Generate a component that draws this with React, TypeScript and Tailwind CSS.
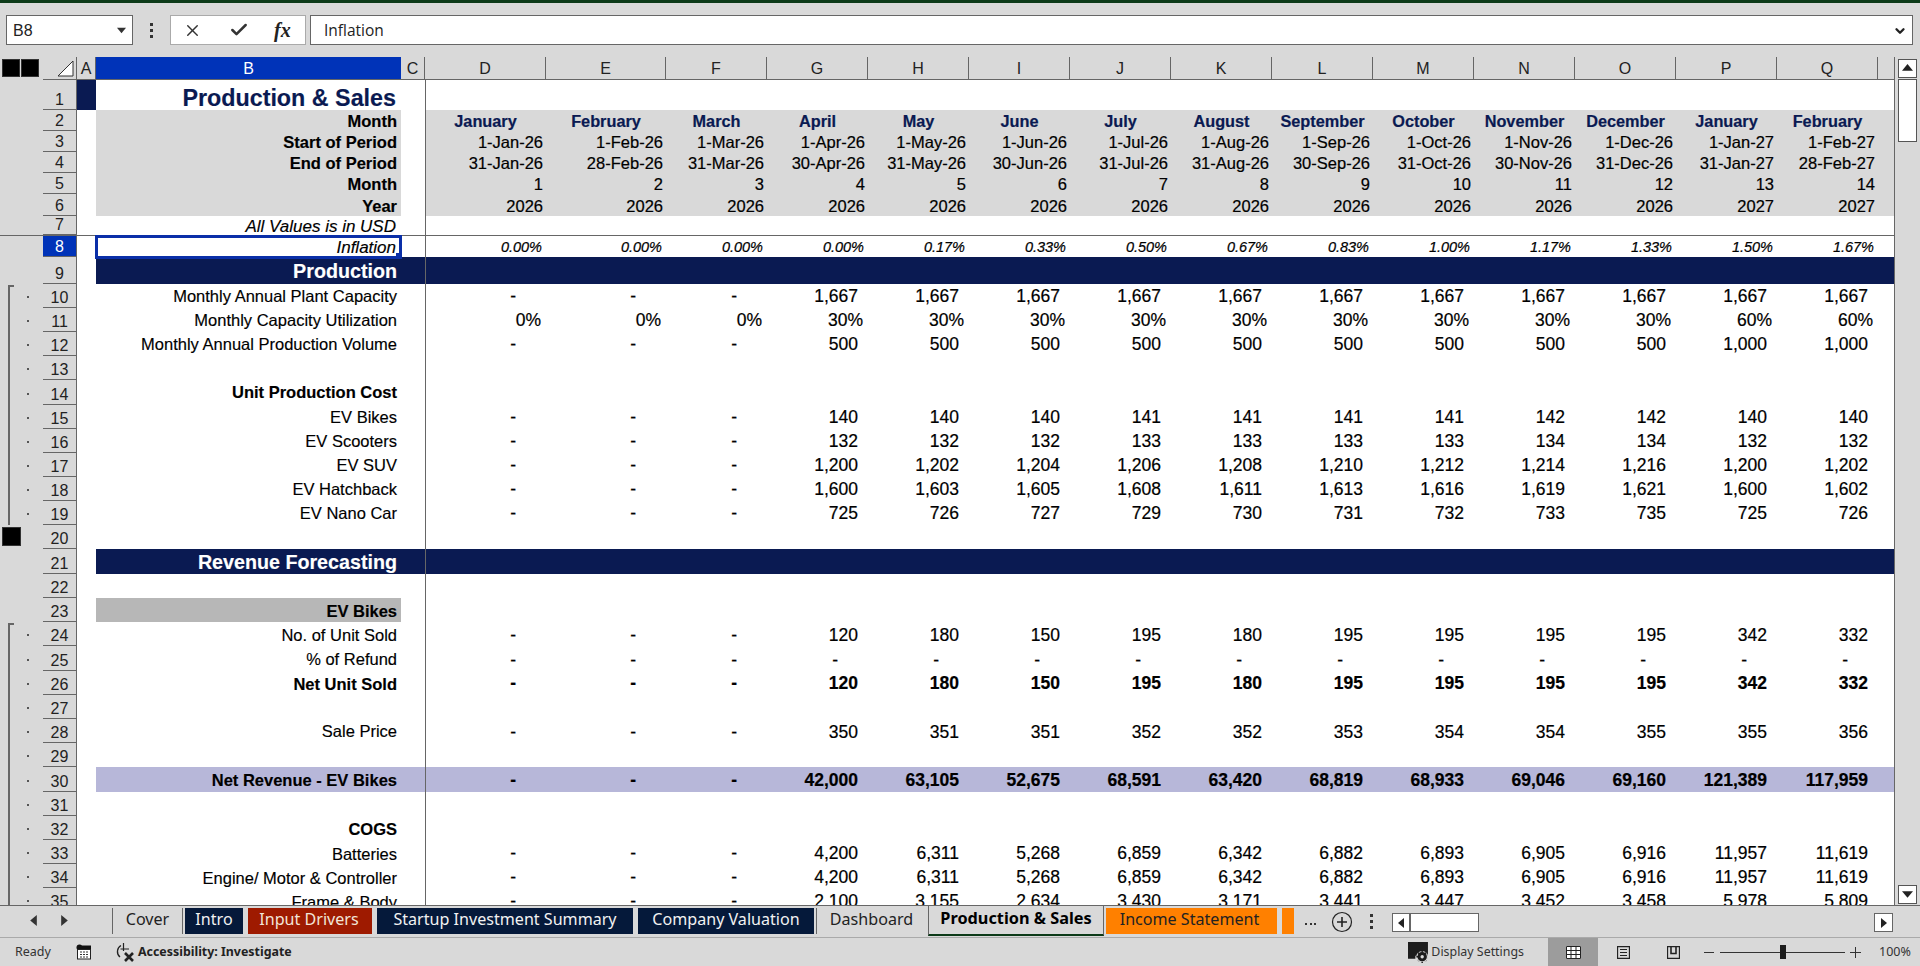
import { Check, ChevronDown, X } from 'lucide-react'
import clsx from 'clsx'
import { twMerge } from 'tailwind-merge'
import type { ReactNode } from 'react'

const GRID_COLS = 'grid grid-cols-[19px_305px_24px_121px_120px_repeat(12,101px)_16px]'
const COL_LETTERS = ['D', 'E', 'F', 'G', 'H', 'I', 'J', 'K', 'L', 'M', 'N', 'O', 'P', 'Q']
const D3 = ['-', '-', '-']

const months = ['January', 'February', 'March', 'April', 'May', 'June', 'July', 'August', 'September', 'October', 'November', 'December', 'January', 'February']
const starts = ['1-Jan-26', '1-Feb-26', '1-Mar-26', '1-Apr-26', '1-May-26', '1-Jun-26', '1-Jul-26', '1-Aug-26', '1-Sep-26', '1-Oct-26', '1-Nov-26', '1-Dec-26', '1-Jan-27', '1-Feb-27']
const ends = ['31-Jan-26', '28-Feb-26', '31-Mar-26', '30-Apr-26', '31-May-26', '30-Jun-26', '31-Jul-26', '31-Aug-26', '30-Sep-26', '31-Oct-26', '30-Nov-26', '31-Dec-26', '31-Jan-27', '28-Feb-27']
const monthNo = ['1', '2', '3', '4', '5', '6', '7', '8', '9', '10', '11', '12', '13', '14']
const years = ['2026', '2026', '2026', '2026', '2026', '2026', '2026', '2026', '2026', '2026', '2026', '2026', '2027', '2027']
const inflation = ['0.00%', '0.00%', '0.00%', '0.00%', '0.17%', '0.33%', '0.50%', '0.67%', '0.83%', '1.00%', '1.17%', '1.33%', '1.50%', '1.67%']

type RowSpec = {
  n: number
  h: string
  label?: string
  labelClass?: string
  cells?: string[]
  cellClass?: string
  pad?: string
  fill?: string
  fillC?: string
  tick?: boolean
  line?: 'start' | 'mid'
  square?: boolean
  selected?: boolean
  freeze?: boolean
  block?: boolean
}

const GRAY = 'bg-[#d9d9d9]'
const NAVY = 'bg-[#0a1a52]'
const LAV = 'bg-[#b7b7d9]'
const HEAD = 'text-[16.5px] font-bold'
const SECTION = 'text-[19.7px] font-bold text-white'
const BOLD = 'text-[16.5px] font-bold'

const ROWS: RowSpec[] = [
  { n: 1, h: 'h-[30px]', label: 'Production & Sales', labelClass: 'text-[23.3px] font-bold text-[#0a1a52] pt-[6px] pr-[5px]', block: true },
  { n: 2, h: 'h-[21px]', label: 'Month', labelClass: HEAD, cells: months, cellClass: 'text-[16.3px] font-bold text-[#0a1a52] justify-center pt-[2px]', pad: 'pr-0', fill: GRAY },
  { n: 3, h: 'h-[21px]', label: 'Start of Period', labelClass: HEAD, cells: starts, cellClass: 'text-[16.5px] pt-[2px]', pad: 'pr-[3px]', fill: GRAY },
  { n: 4, h: 'h-[21px]', label: 'End of Period', labelClass: HEAD, cells: ends, cellClass: 'text-[16.5px] pt-[2px]', pad: 'pr-[3px]', fill: GRAY },
  { n: 5, h: 'h-[21px]', label: 'Month', labelClass: HEAD, cells: monthNo, cellClass: 'text-[16.5px] pt-[2px]', pad: 'pr-[3px]', fill: GRAY },
  { n: 6, h: 'h-[22px]', label: 'Year', labelClass: HEAD, cells: years, cellClass: 'text-[16.5px] pt-[2px]', pad: 'pr-[3px]', fill: GRAY },
  { n: 7, h: 'h-[20px]', label: 'All Values is in USD', labelClass: 'text-[17px] italic pr-[5px]', freeze: true },
  { n: 8, h: 'h-[21px]', label: 'Inflation', labelClass: 'text-[17px] italic pr-[5px]', cells: inflation, cellClass: 'text-[14.5px] italic pt-[2px]', pad: 'pr-[4px]', selected: true },
  { n: 9, h: 'h-[27px]', label: 'Production', labelClass: SECTION, fill: NAVY, fillC: NAVY },
  { n: 10, h: 'h-[24px]', label: 'Monthly Annual Plant Capacity', cells: [...D3, '1,667', '1,667', '1,667', '1,667', '1,667', '1,667', '1,667', '1,667', '1,667', '1,667', '1,667'], tick: true, line: 'start' },
  { n: 11, h: 'h-[24px]', label: 'Monthly Capacity Utilization', cells: ['0%', '0%', '0%', '30%', '30%', '30%', '30%', '30%', '30%', '30%', '30%', '30%', '60%', '60%'], pad: 'pr-[5px]', tick: true, line: 'mid' },
  { n: 12, h: 'h-[24px]', label: 'Monthly Annual Production Volume', cells: [...D3, '500', '500', '500', '500', '500', '500', '500', '500', '500', '1,000', '1,000'], tick: true, line: 'mid' },
  { n: 13, h: 'h-[24px]', tick: true, line: 'mid' },
  { n: 14, h: 'h-[25px]', label: 'Unit Production Cost', labelClass: BOLD, tick: true, line: 'mid' },
  { n: 15, h: 'h-[24px]', label: 'EV Bikes', cells: [...D3, '140', '140', '140', '141', '141', '141', '141', '142', '142', '140', '140'], tick: true, line: 'mid' },
  { n: 16, h: 'h-[24px]', label: 'EV Scooters', cells: [...D3, '132', '132', '132', '133', '133', '133', '133', '134', '134', '132', '132'], tick: true, line: 'mid' },
  { n: 17, h: 'h-[24px]', label: 'EV SUV', cells: [...D3, '1,200', '1,202', '1,204', '1,206', '1,208', '1,210', '1,212', '1,214', '1,216', '1,200', '1,202'], tick: true, line: 'mid' },
  { n: 18, h: 'h-[24px]', label: 'EV Hatchback', cells: [...D3, '1,600', '1,603', '1,605', '1,608', '1,611', '1,613', '1,616', '1,619', '1,621', '1,600', '1,602'], tick: true, line: 'mid' },
  { n: 19, h: 'h-[24px]', label: 'EV Nano Car', cells: [...D3, '725', '726', '727', '729', '730', '731', '732', '733', '735', '725', '726'], tick: true, line: 'mid' },
  { n: 20, h: 'h-[24px]', square: true },
  { n: 21, h: 'h-[25px]', label: 'Revenue Forecasting', labelClass: SECTION, fill: NAVY, fillC: NAVY },
  { n: 22, h: 'h-[24px]' },
  { n: 23, h: 'h-[24px]', label: 'EV Bikes', labelClass: BOLD + ' bg-[#b7b7b7]' },
  { n: 24, h: 'h-[24px]', label: 'No. of Unit Sold', labelClass: 'pt-[3px]', cells: [...D3, '120', '180', '150', '195', '180', '195', '195', '195', '195', '342', '332'], tick: true, line: 'start' },
  { n: 25, h: 'h-[25px]', label: '% of Refund', cells: [...D3, '-', '-', '-', '-', '-', '-', '-', '-', '-', '-', '-'], tick: true, line: 'mid' },
  { n: 26, h: 'h-[24px]', label: 'Net Unit Sold', labelClass: BOLD, cells: [...D3, '120', '180', '150', '195', '180', '195', '195', '195', '195', '342', '332'], cellClass: 'font-bold pt-[2px]', tick: true, line: 'mid' },
  { n: 27, h: 'h-[24px]', tick: true, line: 'mid' },
  { n: 28, h: 'h-[24px]', label: 'Sale Price', labelClass: 'pt-0', cells: [...D3, '350', '351', '351', '352', '352', '353', '354', '354', '355', '355', '356'], tick: true, line: 'mid' },
  { n: 29, h: 'h-[24px]', tick: true, line: 'mid' },
  { n: 30, h: 'h-[25px]', label: 'Net Revenue - EV Bikes', labelClass: BOLD, cells: [...D3, '42,000', '63,105', '52,675', '68,591', '63,420', '68,819', '68,933', '69,046', '69,160', '121,389', '117,959'], cellClass: 'font-bold pt-[2px]', fill: LAV, fillC: LAV, tick: true, line: 'mid' },
  { n: 31, h: 'h-[24px]', tick: true, line: 'mid' },
  { n: 32, h: 'h-[24px]', label: 'COGS', labelClass: BOLD, tick: true, line: 'mid' },
  { n: 33, h: 'h-[24px]', label: 'Batteries', labelClass: 'pt-[4px]', cells: [...D3, '4,200', '6,311', '5,268', '6,859', '6,342', '6,882', '6,893', '6,905', '6,916', '11,957', '11,619'], tick: true, line: 'mid' },
  { n: 34, h: 'h-[24px]', label: 'Engine/ Motor & Controller', labelClass: 'pt-[4px]', cells: [...D3, '4,200', '6,311', '5,268', '6,859', '6,342', '6,882', '6,893', '6,905', '6,916', '11,957', '11,619'], tick: true, line: 'mid' },
  { n: 35, h: 'h-[24px]', label: 'Frame & Body', labelClass: 'pt-[4px]', cells: [...D3, '2,100', '3,155', '2,634', '3,430', '3,171', '3,441', '3,447', '3,452', '3,458', '5,978', '5,809'], tick: true, line: 'mid' },
]

function Triangle({ dir, className }: { dir: 'up' | 'down' | 'left' | 'right'; className?: string }) {
  const d = { up: 'M0 7L5 1L10 7Z', down: 'M0 2L10 2L5 8Z', left: 'M8 0L8 10L2 5Z', right: 'M2 0L8 5L2 10Z' }[dir]
  return (
    <svg viewBox="0 0 10 10" className={className} fill="currentColor">
      <path d={d} />
    </svg>
  )
}

function Cell({ value, fill, cellClass, pad, shift }: { value?: string; fill?: string; cellClass?: string; pad?: string; shift?: string }) {
  return (
    <div
      className={twMerge(
        'flex items-center justify-end overflow-hidden whitespace-nowrap text-[17.5px] leading-none text-black [-webkit-text-stroke:0.2px]',
        fill,
        shift,
        value === '-' ? 'pr-[30px]' : (pad ?? 'pr-[10px]'),
        cellClass,
      )}
    >
      {value}
    </div>
  )
}

function Row({ row }: { row: RowSpec }) {
  // text offsets differ a bit between the blocks of rows
  const labelShift = row.n >= 10 && row.n <= 20 ? '' : 'pt-[2px]'
  const cellShift = row.n >= 21 ? 'pt-[4px]' : 'pt-[2px]'
  return (
    <div className={clsx('flex shrink-0', row.h, row.freeze && 'border-b border-[#666]')}>
      <div className="relative w-[43px] shrink-0">
        {row.line && <div className={clsx('absolute bottom-0 left-[8px] w-[2px] bg-[#666]', row.line === 'start' ? 'top-[1px]' : 'top-0')} />}
        {row.line === 'start' && <div className="absolute left-[8px] top-[1px] h-[2px] w-[6px] bg-[#666]" />}
        {row.tick && <div className="absolute left-[27px] top-1/2 h-[2px] w-[2px] bg-[#555]" />}
        {row.square && <div className="absolute left-[2px] top-[2px] h-[19px] w-[19px] border border-[#333] bg-black" />}
      </div>
      <div
        className={clsx(
          'flex w-[34px] shrink-0 items-end justify-center border-r border-b border-[#666] pb-[1px] text-[16px] leading-none',
          row.selected ? 'bg-[#0033b8] text-white' : 'text-[#222]',
        )}
      >
        {row.n}
      </div>
      <div className={clsx(GRID_COLS, 'h-full')}>
        <div className={row.block ? NAVY : 'bg-white'} />
        <div
          className={twMerge(
            'relative flex items-center justify-end overflow-hidden whitespace-nowrap pr-[4px] text-[16.5px] leading-none text-black [-webkit-text-stroke:0.15px]',
            row.fill ?? 'bg-white',
            labelShift,
            row.labelClass,
          )}
        >
          {row.label}
        </div>
        <div className={row.fillC ?? 'bg-white'} />
        {COL_LETTERS.map((c, i) => (
          <Cell key={c} value={row.cells?.[i]} fill={row.fill ?? 'bg-white'} cellClass={row.cellClass} pad={row.pad} shift={cellShift} />
        ))}
        <div className={row.fill ?? 'bg-white'} />
      </div>
    </div>
  )
}

function ColHeaders() {
  const head = 'flex items-center justify-center border-r border-[#666] pt-[2px] text-[16px] leading-none text-[#222]'
  return (
    <div className="flex h-[23px] shrink-0">
      <div className="flex w-[43px] shrink-0 items-start gap-px pl-[2px] pt-[2px]">
        <div className="h-[18px] w-[18px] border border-[#333] bg-black" />
        <div className="h-[18px] w-[18px] border border-[#333] bg-black" />
      </div>
      <div className="flex w-[34px] shrink-0 items-end justify-end border-r border-b border-[#666] pb-[2px] pr-[2px]">
        <svg width="17" height="17" viewBox="0 0 17 17">
          <path d="M16 1V16H1Z" fill="#fff" stroke="#333" strokeWidth="1" />
        </svg>
      </div>
      <div className={clsx(GRID_COLS, 'flex-1 border-b border-[#666]')}>
        <div className={head}>A</div>
        <div className="flex items-center justify-center bg-[#0033b8] pt-[2px] text-[16px] leading-none text-white">B</div>
        <div className={head}>C</div>
        {COL_LETTERS.map((c) => (
          <div key={c} className={head}>
            {c}
          </div>
        ))}
        <div />
      </div>
    </div>
  )
}

function FormulaBar() {
  return (
    <div className="mt-[12px] mb-[12px] flex h-[30px] shrink-0 pl-[6px] pr-[7px]">
      <div className="flex w-[127px] items-center justify-between border border-[#666] bg-white pl-[6px] pr-[6px] pt-[1px] font-['Liberation_Sans',sans-serif] text-[16px] text-[#222]">
        <span>B8</span>
        <Triangle dir="down" className="h-[9px] w-[9px] text-[#333]" />
      </div>
      <div className="flex w-[37px] flex-col items-center justify-center gap-[3px]">
        <div className="h-[3px] w-[3px] bg-[#333]" />
        <div className="h-[3px] w-[3px] bg-[#333]" />
        <div className="h-[3px] w-[3px] bg-[#333]" />
      </div>
      <div className="flex w-[136px] items-center border border-[#aaa] bg-white">
        <X size={19} strokeWidth={1.8} className="ml-[12px] text-[#333]" />
        <Check size={20} strokeWidth={3} className="ml-[27px] text-[#333]" />
        <span className="ml-[25px] font-['Liberation_Serif',serif] text-[20px] font-bold italic leading-none text-[#222]">fx</span>
      </div>
      <div className="ml-[4px] flex flex-1 items-center justify-between border border-[#666] bg-white pl-[13px] pr-[5px] pt-[1px] font-['Open_Sans',sans-serif] text-[15.5px] text-[#222]">
        <span>Inflation</span>
        <ChevronDown size={14} strokeWidth={4} className="text-[#222]" />
      </div>
    </div>
  )
}

function VScrollbar() {
  const btn = 'flex items-center justify-center border border-[#555] bg-white text-[#222] h-[19px] w-[19px]'
  return (
    <div className="flex w-[25px] shrink-0 flex-col items-start border-l border-[#666] pl-[3px] pt-[2px]">
      <div className={btn}>
        <Triangle dir="up" className="h-[11px] w-[11px]" />
      </div>
      <div className="mt-px h-[63px] w-[19px] border border-[#555] bg-white" />
      <div className={clsx(btn, 'mt-auto mb-px')}>
        <Triangle dir="down" className="h-[11px] w-[11px]" />
      </div>
    </div>
  )
}

function Tab({ w, className, children }: { w: string; className: string; children: ReactNode }) {
  return <div className={clsx('flex h-[26px] shrink-0 items-center justify-center whitespace-nowrap pb-[4px] text-[16.1px] leading-none', w, className)}>{children}</div>
}

function TabBar() {
  const navy = 'bg-[#05193a] text-[#f2f2f2]'
  return (
    <div className="flex h-[32px] shrink-0 items-start border-t border-[#666] pt-[2px] font-['Noto_Sans',sans-serif]">
      <div className="flex w-[112px] shrink-0 items-center pl-[28px] pt-[7px] text-[#333]">
        <Triangle dir="left" className="h-[11px] w-[11px]" />
        <Triangle dir="right" className="ml-[20px] h-[11px] w-[11px]" />
      </div>
      <Tab w="w-[71px]" className="border-x border-[#666] text-[#222]">Cover</Tab>
      <Tab w="w-[58px] ml-[2px]" className={navy}>Intro</Tab>
      <Tab w="w-[124px] ml-[5px]" className="bg-[#9e1a00] pr-[2px] text-[#f2e6d8]">Input Drivers</Tab>
      <Tab w="w-[256px] ml-[5px]" className={navy}>Startup Investment Summary</Tab>
      <Tab w="w-[176px] ml-[5px]" className={navy}>Company Valuation</Tab>
      <Tab w="w-[112px] ml-[2px]" className="border-l border-[#666] pr-[2px] text-[#222]">Dashboard</Tab>
      <div className="-mt-[2px] flex h-[30px] w-[176px] shrink-0 items-center justify-center border-x border-[#666] border-b-[2px] border-b-[#0c3a18] bg-[#d9d9d9] pb-[3px] text-[16.3px] font-bold leading-none text-black">
        Production &amp; Sales
      </div>
      <Tab w="w-[171px] ml-[2px]" className="bg-[#ff8000] pr-[4px] text-[#222]">Income Statement</Tab>
      <Tab w="w-[12px] ml-[5px]" className="bg-[#ff8000]">{''}</Tab>
      <div className="ml-[11px] flex h-[26px] w-[11px] shrink-0 items-center justify-between pt-[5px]">
        <div className="h-[2px] w-[2px] bg-[#333]" />
        <div className="h-[2px] w-[2px] bg-[#333]" />
        <div className="h-[2px] w-[2px] bg-[#333]" />
      </div>
      <svg width="22" height="22" viewBox="0 0 22 22" className="ml-[15px] mt-[3px] shrink-0" fill="none" stroke="#222">
        <circle cx="11" cy="11" r="9.5" strokeWidth="1.2" />
        <path d="M11 6V16M6 11H16" strokeWidth="1.6" />
      </svg>
      <div className="ml-[17px] flex h-[26px] w-[3px] shrink-0 flex-col items-center justify-center gap-[3px]">
        <div className="h-[3px] w-[3px] bg-[#333]" />
        <div className="h-[3px] w-[3px] bg-[#333]" />
        <div className="h-[3px] w-[3px] bg-[#333]" />
      </div>
      <div className="ml-[19px] mt-[5px] flex h-[19px] w-[87px] shrink-0 border border-[#666] bg-white">
        <div className="flex w-[18px] items-center justify-center border-r-2 border-[#666] text-[#222]">
          <Triangle dir="left" className="h-[10px] w-[10px]" />
        </div>
      </div>
      <div className="ml-[395px] mt-[5px] flex h-[19px] w-[19px] shrink-0 items-center justify-center border border-[#666] bg-white text-[#222]">
        <Triangle dir="right" className="h-[10px] w-[10px]" />
      </div>
    </div>
  )
}

function MacroIcon() {
  return (
    <svg width="16" height="16" viewBox="0 0 16 16" className="shrink-0">
      <circle cx="3.5" cy="3.5" r="3" fill="#111" />
      <path d="M6 1.5H15V5H6Z" fill="#111" />
      <rect x="1.5" y="5.5" width="13" height="9.5" fill="#fff" stroke="#222" />
      <path d="M4 8h2M7 8h2M10 8h2M4 10.5h2M7 10.5h2M10 10.5h2M4 13h2M7 13h2M10 13h2" stroke="#333" />
    </svg>
  )
}

function AccessibilityIcon() {
  return (
    <svg width="20" height="20" viewBox="0 0 20 20" className="shrink-0" fill="none" stroke="#222">
      <path d="M6 3.5A7 7 0 0 0 5 15" strokeWidth="1.3" />
      <path d="M8.5 1V9M5.5 7H14" strokeWidth="1.2" />
      <path d="M10 11L18 19M18 11L10 19" strokeWidth="2.6" />
    </svg>
  )
}

function DisplayIcon() {
  return (
    <svg width="21" height="21" viewBox="0 0 20 20" className="shrink-0">
      <path d="M0 0H19V13H7V16H0Z" fill="#1c1c1c" />
      <circle cx="13.5" cy="14" r="5" fill="#1c1c1c" stroke="#d9d9d9" />
      <circle cx="13.5" cy="14" r="1.6" fill="#d9d9d9" />
      <path d="M13.5 8V20M8 14H19M9.6 10L17.5 18M17.5 10L9.6 18" stroke="#1c1c1c" strokeWidth="1.4" strokeDasharray="2 9" />
    </svg>
  )
}

function StatusBar() {
  return (
    <div className="flex h-[29px] shrink-0 items-center border-t border-[#aaa] font-['Noto_Sans',sans-serif] text-[#333]">
      <span className="ml-[15px] w-[61px] text-[12.5px] leading-none">Ready</span>
      <MacroIcon />
      <div className="ml-[23px]">
        <AccessibilityIcon />
      </div>
      <span className="ml-[3px] text-[12.4px] font-bold leading-none text-[#222]">Accessibility: Investigate</span>
      <div className="ml-auto flex h-full items-center">
        <DisplayIcon />
        <span className="ml-[2px] text-[12.4px] leading-none">Display Settings</span>
        <div className="ml-[24px] flex h-full w-[50px] items-center justify-center bg-[#9c9c9c]">
          <svg width="15" height="13" viewBox="0 0 15 13">
            <rect width="15" height="13" fill="#fff" />
            <path d="M.5 .5H14.5V12.5H.5ZM5 .5V12.5M10 .5V12.5M.5 4.5H14.5M.5 8.5H14.5" fill="none" stroke="#222" />
          </svg>
        </div>
        <div className="flex w-[50px] justify-center">
          <svg width="13" height="13" viewBox="0 0 13 13" fill="none" stroke="#222">
            <path d="M.5 .5H12.5V12.5H.5Z" strokeWidth="1.3" />
            <path d="M3 3.5H10M3 6.5H10M3 9.5H10" />
          </svg>
        </div>
        <div className="flex w-[50px] justify-center">
          <svg width="13" height="13" viewBox="0 0 13 13" fill="none" stroke="#222">
            <path d="M.5 .5H12.5V12.5H.5Z" strokeWidth="1.3" />
            <path d="M4 .5V7.5H9V.5" strokeWidth="1.6" />
          </svg>
        </div>
        <div className="ml-[6px] h-px w-[10px] bg-[#333]" />
        <div className="relative ml-[6px] h-px w-[125px] bg-[#333]">
          <div className="absolute left-[60px] top-[-7px] h-[14px] w-[6px] bg-[#1c1c1c]" />
        </div>
        <div className="relative ml-[5px] h-[11px] w-[11px]">
          <div className="absolute left-0 top-[5px] h-px w-[11px] bg-[#333]" />
          <div className="absolute left-[5px] top-0 h-[11px] w-px bg-[#333]" />
        </div>
        <span className="ml-[18px] mr-[11px] w-[30px] text-[12.5px] leading-none">100%</span>
      </div>
    </div>
  )
}

export default function App() {
  return (
    <div className="flex h-screen w-[1920px] flex-col overflow-hidden bg-[#d9d9d9] font-['Liberation_Sans',Arial,sans-serif]">
      <div className="h-[3px] shrink-0 bg-[#0c3a18]" />
      <FormulaBar />
      <div className="flex min-h-0 flex-1">
        <div className="flex w-[1894px] shrink-0 flex-col overflow-hidden">
          <ColHeaders />
          <div className="relative flex min-h-0 flex-1 flex-col overflow-hidden">
            {ROWS.map((row) => (
              <Row key={row.n} row={row} />
            ))}
            {/* freeze pane line and the selected cell sit over the grid */}
            <div className="absolute bottom-0 left-[425px] top-0 w-px bg-[#666]" />
            <div className="absolute left-[95px] top-[155px] h-[24px] w-[307px] border-[3px] border-[#0a2fa8]">
              <div className="absolute -bottom-[3px] -right-[3px] h-[6px] w-[6px] bg-[#0a2fa8]" />
            </div>
          </div>
        </div>
        <VScrollbar />
      </div>
      <TabBar />
      <StatusBar />
    </div>
  )
}
